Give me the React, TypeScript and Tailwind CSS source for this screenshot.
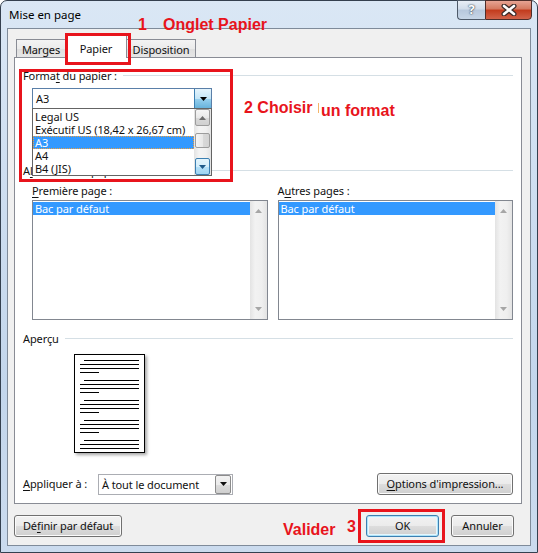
import React from "react";

function Tri({ className = "", up = false }: { className?: string; up?: boolean }) {
  return (
    <svg width="7" height="4" viewBox="0 0 7 4" className={className}>
      <polygon points={up ? "0,4 7,4 3.5,0" : "0,0 7,0 3.5,4"} fill="currentColor" />
    </svg>
  );
}

function U({ children }: { children: React.ReactNode }) {
  return <span className="underline underline-offset-[2px] decoration-1">{children}</span>;
}

function ListBox() {
  return (
    <div className="w-[236px] h-[120px] border border-[#828790] bg-white flex">
      <div className="flex-1 pt-[1px]">
        <div className="h-[13px] leading-[13px] bg-[#3399ff] text-white pl-[2px]">Bac par défaut</div>
      </div>
      <div className="w-[17px] h-full bg-[linear-gradient(to_right,#e3e3e3,#f2f2f2_30%,#efefef_70%,#e3e3e3)] flex flex-col items-center justify-between py-[8px] text-[#a6a6a6]">
        <Tri up />
        <Tri />
      </div>
    </div>
  );
}

function Preview() {
  const groups = [0, 1, 2, 3, 4];
  return (
    <svg width="71" height="99" viewBox="0 0 71 99" className="shadow-[2px_2px_3px_rgba(0,0,0,0.35)] bg-white">
      <rect x="0.5" y="0.5" width="70" height="98" fill="white" stroke="black" />
      {groups.map((g) => {
        const y = 6 + 20 * g;
        return (
          <g key={g} stroke="black" strokeWidth="1">
            <line x1="10" x2="65" y1={y + 0.5} y2={y + 0.5} />
            <line x1="6" x2="65" y1={y + 4.5} y2={y + 4.5} />
            <line x1="6" x2="65" y1={y + 8.5} y2={y + 8.5} />
            {g < 4 && <line x1="6" x2="25" y1={y + 12.5} y2={y + 12.5} />}
          </g>
        );
      })}
    </svg>
  );
}

const btn =
  "flex items-center justify-center h-[22px] rounded-[3px] border border-[#707070] bg-[linear-gradient(to_bottom,#f2f2f2_0%,#ebebeb_50%,#dddddd_51%,#cfcfcf_100%)] shadow-[inset_0_0_0_1px_#fbfbfb]";

export default function App() {
  return (
    <div className="relative w-[538px] h-[553px] overflow-hidden font-['Noto_Sans',sans-serif] text-[11px] tracking-[-0.1px] text-[#111]">
      {/* Window frame */}
      <div className="w-[538px] h-[553px] rounded-t-[7px] border border-[#34404f] bg-[linear-gradient(to_bottom,#dae7f5,#cfdff1_30%,#c3d6ec_70%,#cbdbee)] flex flex-col px-[6px] pb-[6px]">
        {/* Title bar */}
        <div className="h-[27px] flex items-start">
          <div className="pt-[6px] pl-[2px] text-[11.5px] leading-[16px] tracking-normal text-black">Mise en page</div>
          <div className="ml-auto mr-[-1px] -mt-[1px] flex h-[20px]">
            <div className="w-[28px] h-full rounded-bl-[4px] border border-[#4e5a69] border-r-0 bg-[linear-gradient(to_bottom,#e8eef6,#d0dcea_45%,#b7c8dc_50%,#c7d6e7)] flex items-center justify-center text-[13px] font-bold text-white [text-shadow:0_0_2px_#33404f,0_0_1px_#33404f]">
              ?
            </div>
            <div className="w-[47px] h-full rounded-br-[4px] border border-[#4e2e2a] bg-[linear-gradient(to_bottom,#e7a493,#d4785f_45%,#c23a1c_50%,#d1634a)] flex items-center justify-center">
              <svg width="16" height="12" viewBox="0 0 16 12">
                <path d="M3 2 L13 10 M13 2 L3 10" stroke="#3b2a28" strokeWidth="5" strokeLinecap="round" />
                <path d="M3 2 L13 10 M13 2 L3 10" stroke="white" strokeWidth="2.6" strokeLinecap="round" />
              </svg>
            </div>
          </div>
        </div>

        {/* Client area */}
        <div className="w-[524px] h-[518px] border border-[#7f8b9a] bg-[#f0f0f0] flex flex-col pl-[6px] pt-[6px]">
          {/* Tabs */}
          <div className="flex items-end h-[22px] pl-[2px]">
            <div className="w-[50px] h-[18px] border border-b-0 border-[#898c95] bg-[linear-gradient(to_bottom,#f3f3f3,#ebebeb_50%,#dedede_51%,#e6e6e6)] flex justify-center pt-[3px] leading-[14px]">
              Marges
            </div>
            <div className="relative z-10 -mb-px w-[62px] h-[23px] border border-b-0 border-[#898c95] bg-white flex justify-center pt-[6px] leading-[14px] -ml-px">
              Papier
            </div>
            <div className="w-[70px] h-[18px] border border-b-0 border-[#898c95] bg-[linear-gradient(to_bottom,#f3f3f3,#ebebeb_50%,#dedede_51%,#e6e6e6)] flex justify-center pt-[3px] leading-[14px] -ml-px">
              Disposition
            </div>
          </div>

          {/* Tab panel */}
          <div className="w-[508px] h-[447px] border border-[#898c95] bg-white flex flex-col pl-[8px] pr-[8px]">
            <div className="mt-[11px] h-[14px] flex items-start leading-[14px]">
              <span>
                Forma<U>t</U> du papier :
              </span>
              <div className="flex-1 ml-[6px] mt-[6px] h-px bg-[#d5dfe5]" />
            </div>

            {/* Format combo */}
            <div className="relative mt-[5px] ml-[9px] w-[180px] h-[21px] border border-[#5a7fa8] bg-white flex">
              <div className="flex-1 pl-[3px] leading-[19px]">A3</div>
              <div className="w-[17px] h-full border-l border-[#3c7fb1] bg-[linear-gradient(to_bottom,#e5f4fc,#c4e5f6_50%,#98d1ef_51%,#68b3db)] flex items-center justify-center text-black">
                <Tri />
              </div>
              {/* Dropdown list */}
              <div className="absolute left-[-1px] top-[19px] z-20 w-[180px] h-[68px] border border-[#646464] bg-white flex">
                <div className="flex-1 pt-[1px] flex flex-col">
                  <div className="h-[13px] leading-[13px] pl-[2px]">Legal US</div>
                  <div className="h-[13px] leading-[13px] pl-[2px] whitespace-nowrap">Exécutif US (18,42 x 26,67 cm)</div>
                  <div className="h-[13px] leading-[13px] pl-[2px] bg-[#3399ff] text-white outline-1 outline-dotted outline-[#f0a040] -outline-offset-1">A3</div>
                  <div className="h-[13px] leading-[13px] pl-[2px]">A4</div>
                  <div className="h-[13px] leading-[13px] pl-[2px]">B4 (JIS)</div>
                </div>
                <div className="w-[17px] h-full bg-[linear-gradient(to_right,#e3e3e3,#f4f4f4_30%,#f0f0f0_70%,#e3e3e3)] flex flex-col px-[1px]">
                  <div className="h-[17px] rounded-[2px] border border-[#9c9c9c] bg-[linear-gradient(to_bottom,#f6f6f6,#e9e9e9_50%,#d9d9d9_51%,#d0d0d0)] flex items-center justify-center text-[#6d6d6d]">
                    <Tri up />
                  </div>
                  <div className="mt-[7px] h-[15px] rounded-[2px] border border-[#9c9c9c] bg-[linear-gradient(to_right,#f5f5f5,#e8e8e8_50%,#d9d9d9_51%,#d3d3d3)]" />
                  <div className="flex-1" />
                  <div className="h-[17px] rounded-[2px] border border-[#3c7fb1] bg-[linear-gradient(to_bottom,#e3f4fc,#d4eefb_50%,#b6e0f8_51%,#9ed5f3)] flex items-center justify-center text-[#1e5a8a]">
                    <Tri />
                  </div>
                </div>
              </div>
            </div>

            {/* Alimentation papier (hidden behind dropdown) */}
            <div className="mt-[55px] h-[14px] flex items-start leading-[14px]">
              <span>
                A<U>l</U>imentation papier
              </span>
              <div className="flex-1 ml-[6px] mt-[6px] h-px bg-[#d5dfe5]" />
            </div>

            <div className="mt-[6px] ml-[9px] flex gap-[10px] leading-[14px]">
              <div className="w-[236px]">
                <U>P</U>remière page :
              </div>
              <div className="w-[236px]">
                A<U>u</U>tres pages :
              </div>
            </div>
            <div className="mt-[2px] ml-[9px] flex gap-[10px]">
              <ListBox />
              <ListBox />
            </div>

            <div className="mt-[12px] h-[14px] flex items-start leading-[14px]">
              <span>Aperçu</span>
              <div className="flex-1 ml-[6px] mt-[6px] h-px bg-[#d5dfe5]" />
            </div>

            <div className="mt-[8px] ml-[51px]">
              <Preview />
            </div>

            <div className="mt-[20px] h-[22px] flex items-center">
              <div className="w-[75px]">
                <U>A</U>ppliquer à :
              </div>
              <div className="w-[135px] h-[21px] border border-[#abadb3] bg-white flex items-center">
                <div className="flex-1 pl-[3px] leading-[19px]">À tout le document</div>
                <div className="w-[16px] h-[19px] mr-[1px] rounded-[2px] border border-[#8c8c8c] bg-[linear-gradient(to_bottom,#f2f2f2,#ebebeb_50%,#dddddd_51%,#cfcfcf)] flex items-center justify-center">
                  <Tri />
                </div>
              </div>
              <div className={`${btn} ml-auto w-[136px]`}>
                <span>
                  <U>O</U>ptions d&apos;impression...
                </span>
              </div>
            </div>
          </div>

          {/* Bottom buttons */}
          <div className="mt-[11px] flex pr-[16px]">
            <div className={`${btn} w-[108px]`}>
              <span>
                Dé<U>f</U>inir par défaut
              </span>
            </div>
            <div className="ml-auto w-[73px] h-[22px] rounded-[3px] border border-[#3c7fb1] bg-[linear-gradient(to_bottom,#f2f2f2_0%,#ebebeb_50%,#dddddd_51%,#cfcfcf_100%)] shadow-[inset_0_0_0_1px_#aee3f8,inset_0_0_0_2px_#e6f6fd] flex items-center justify-center">
              OK
            </div>
            <div className={`${btn} ml-[12px] w-[63px]`}>Annuler</div>
          </div>
        </div>
      </div>

      {/* Annotations */}
      <div className="absolute left-[65px] top-[33px] w-[66px] h-[32px] border-[3px] border-[#e8141c] pointer-events-none z-30" />
      <div className="absolute left-[19px] top-[69px] w-[214px] h-[113px] border-[3px] border-[#e8141c] pointer-events-none z-30" />
      <div className="absolute left-[358px] top-[509px] w-[87px] h-[34px] border-[3px] border-[#e8141c] pointer-events-none z-30" />

      <div className="absolute left-[138px] top-[17px] font-['Liberation_Sans',Arial,sans-serif] font-bold text-[16px] leading-[16px] tracking-normal text-[#e8141c] z-30">
        1
      </div>
      <div className="absolute left-[163px] top-[17px] font-['Liberation_Sans',Arial,sans-serif] font-bold text-[16px] leading-[16px] tracking-normal text-[#e8141c] z-30 whitespace-nowrap">
        Onglet Papier
      </div>
      <div className="absolute left-[244px] top-[100px] font-['Liberation_Sans',Arial,sans-serif] font-bold text-[16px] leading-[16px] tracking-normal text-[#e8141c] z-30 whitespace-nowrap">
        2 Choisir
      </div>
      <div className="absolute left-[318px] top-[103px] w-px h-[10px] bg-[#f5b56a] z-30" />
      <div className="absolute left-[321px] top-[103px] font-['Liberation_Sans',Arial,sans-serif] font-bold text-[16px] leading-[16px] tracking-normal text-[#e8141c] z-30 whitespace-nowrap">
        un format
      </div>
      <div className="absolute left-[283px] top-[522px] font-['Liberation_Sans',Arial,sans-serif] font-bold text-[16px] leading-[16px] tracking-normal text-[#e8141c] z-30">
        Valider
      </div>
      <div className="absolute left-[347px] top-[519px] font-['Liberation_Sans',Arial,sans-serif] font-bold text-[16px] leading-[16px] tracking-normal text-[#e8141c] z-30">
        3
      </div>
    </div>
  );
}
